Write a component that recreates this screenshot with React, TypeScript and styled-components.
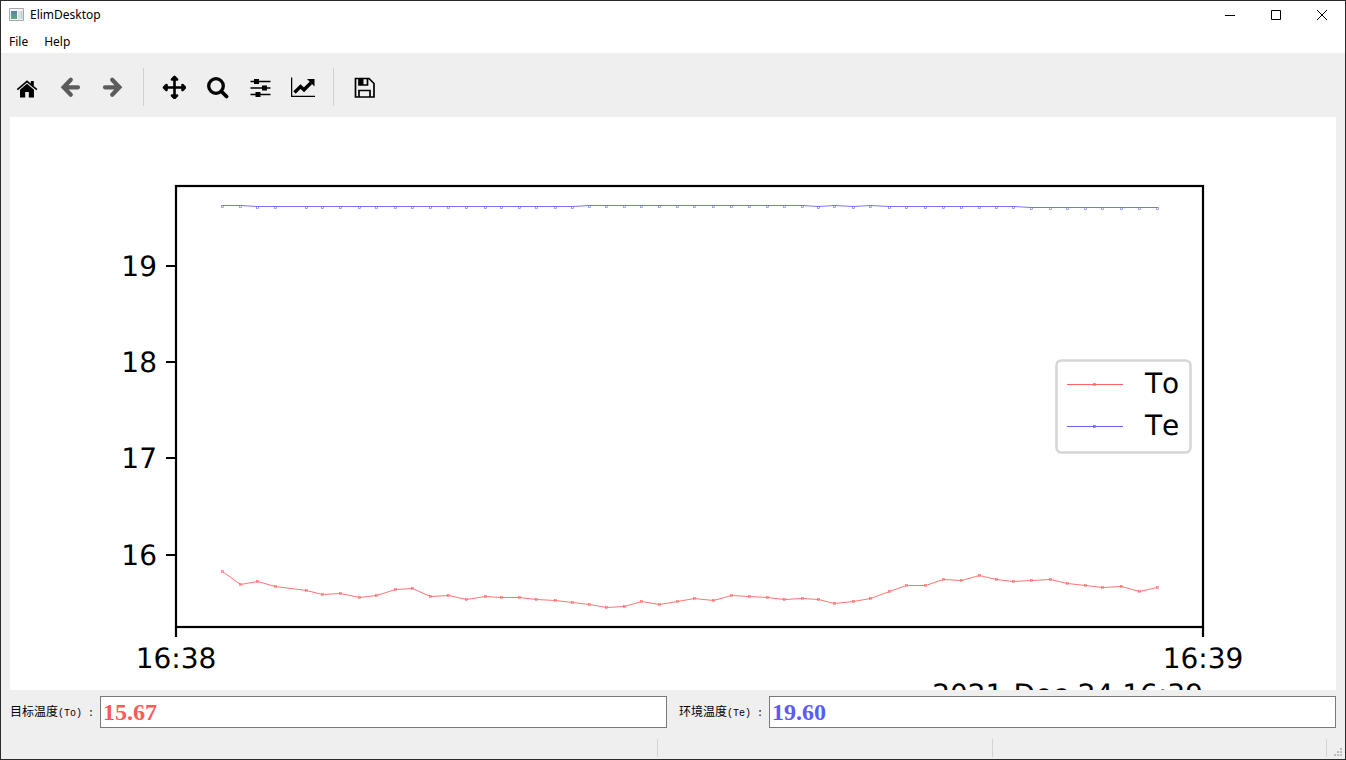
import React from "react";
import styled, { createGlobalStyle } from "styled-components";

const GlobalStyle = createGlobalStyle`
  *, *::before, *::after { box-sizing: border-box; }
  body { margin: 0; background: #efefef; }
`;

const Window = styled.div`
  display: flex;
  flex-direction: column;
  min-height: 100vh;
  border: 1px solid #2b2b2b;
  background: #efefef;
  color: #000;
  font: 12px/18px "Open Sans", sans-serif;
`;

const TitleBar = styled.header`
  display: flex;
  align-items: center;
  height: 28px;
  padding-left: 8px;
  background: #fff;
`;

const Title = styled.h1`
  flex: 1;
  margin: 0 0 0 5px;
  font: 400 12px/18px "Noto Sans", sans-serif;
`;

const CaptionButton = styled.button`
  display: flex;
  align-items: center;
  justify-content: center;
  width: 46px;
  height: 28px;
  padding: 0;
  border: 0;
  background: none;
`;

const MenuBar = styled.nav`
  display: flex;
  height: 24px;
  background: #fff;
`;

const MenuButton = styled.button`
  padding: 2px 8px 0;
  border: 0;
  background: none;
  color: #000;
  font: 12px/22px "Noto Sans", sans-serif;
`;

const Toolbar = styled.div`
  display: flex;
  align-items: center;
  height: 64px;
  padding: 4px 4px 0;
`;

const ToolButton = styled.button`
  display: flex;
  align-items: center;
  justify-content: center;
  width: 43px;
  height: 38px;
  padding: 0;
  border: 0;
  background: none;
  color: #000;
  &:disabled { color: #5c5c5c; }
`;

const Separator = styled.span`
  width: 1px;
  height: 38px;
  margin: 0 8px 0 9px;
  background: #d0d0d0;
`;

const Figure = styled.main`
  display: flex;
  flex: 1 0 auto;
  margin: 0 9px;
  background: #fff;
`;

const Plot = styled.svg`
  display: block;
  width: 100%;
  height: auto;
  overflow: hidden;
`;

const PlotText = styled.g`
  fill: #000;
  font: 28px "DejaVu Sans", sans-serif;
  font-kerning: none;
  text-rendering: geometricPrecision;
`;

const Readings = styled.form`
  display: flex;
  gap: 12px;
  padding: 6px 9px 0;
`;

const Field = styled.div`
  display: flex;
  flex: 1;
  align-items: center;
  min-width: 0;
`;

const FieldLabel = styled.label`
  flex: none;
  width: 90px;
  white-space: pre;
  font: 12px/16px "Noto Sans CJK SC", sans-serif;
`;

const FieldSymbol = styled.span`
  font: 10px/16px "Liberation Mono", monospace;
`;

const Reading = styled.input<{ $color: string }>`
  flex: 1;
  min-width: 0;
  height: 32px;
  padding: 0 2px;
  border: 1px solid #7a7a7a;
  border-radius: 0;
  outline: 0;
  background: #fff;
  color: ${(p) => p.$color};
  font: 700 24px/28px "Liberation Serif", serif;
`;

const StatusBar = styled.footer`
  display: flex;
  height: 31px;
  padding: 11px 0 2px;
`;

const StatusCell = styled.span`
  flex: 33;
  border-right: 1px solid #d3d3d3;
  &:first-child { flex-grow: 65; }
`;

const Grip = styled.svg`
  align-self: flex-end;
  width: 18px;
  height: 10px;
`;

type Point = [number, number];

const targetSeries: Point[] = [
  [222, 571], [240, 584], [257, 581], [275, 586], [306, 590], [322, 594], [340, 593], [359, 597],
  [376, 595], [395, 589], [412, 588], [430, 596], [448, 595], [466, 599], [485, 596], [501, 597],
  [519, 597], [536, 599], [555, 600], [572, 602], [589, 604], [606, 607], [624, 606], [641, 601],
  [659, 604], [677, 601], [694, 598], [713, 600], [731, 595], [749, 596], [767, 597], [784, 599],
  [802, 598], [818, 599], [834, 603], [853, 601], [870, 598], [889, 591], [906, 585], [925, 585],
  [943, 579], [961, 580], [979, 575], [996, 579], [1013, 581], [1031, 580], [1050, 579], [1067, 583],
  [1085, 585], [1102, 587], [1121, 586], [1139, 591], [1157, 587],
];

const ambientY = (x: number) => {
  if (x < 250) return 205;
  if (x < 580) return 206;
  if (x < 810) return 205;
  if (x === 834 || x === 870) return 205;
  return x < 1020 ? 206 : 207;
};
const ambientSeries: Point[] = targetSeries.map(([x]) => [x, ambientY(x)]);

type SeriesProps = { points: Point[]; color: string; markerDrop?: number };

const Series = ({ points, color, markerDrop = 0 }: SeriesProps) => (
  <g fill="none" stroke={color}>
    <polyline points={points.map(([x, y]) => `${x + 0.5},${y + 0.5}`).join(" ")} strokeWidth="0.9" />
    {points.map(([x, y]) => (
      <rect key={x} x={x - 0.5} y={y - 0.5 + markerDrop} width="2" height="2" strokeWidth="0.6" />
    ))}
  </g>
);

const RED = "#ff6464";
const BLUE = "#6464ff";

const Chart = () => (
  <Plot viewBox="10 117 1326 573" role="img" aria-label="To / Te">
    <rect x="176" y="186" width="1027" height="441" fill="none" stroke="#000" strokeWidth="2.2" />
    <path d="M166 266h10M166 362h10M166 458h10M166 555h10M176 627v10M1203 627v10" stroke="#000" strokeWidth="2.2" />
    <Series points={ambientSeries} color={BLUE} markerDrop={1} />
    <Series points={targetSeries} color={RED} />
    <rect x="1056.500" y="360.500" width="134" height="92" rx="5" fill="#fff" stroke="#d6d6d6" strokeWidth="2.600" />
    <PlotText>
      <g textAnchor="end">
        <text x="157" y="276">19</text>
        <text x="157" y="372">18</text>
        <text x="157" y="468">17</text>
        <text x="157" y="565">16</text>
        <text x="1203" y="704">2021-Dec-24 16:39</text>
      </g>
      <g textAnchor="middle">
        <text x="176" y="668">16:38</text>
        <text x="1203" y="668">16:39</text>
      </g>
      <text x="1145" y="393">To</text>
      <text x="1145" y="435">Te</text>
    </PlotText>
    <path d="M1067 384.500h56" stroke={RED} />
    <rect x="1093.500" y="383.500" width="2" height="2" fill="none" stroke={RED} strokeWidth="0.7" />
    <path d="M1067 426.500h56" stroke={BLUE} />
    <rect x="1093.500" y="425.500" width="2" height="2" fill="none" stroke={BLUE} strokeWidth="0.7" />
  </Plot>
);

const Icon = ({ children }: { children: React.ReactNode }) => (
  <svg width="24" height="24" viewBox="0 0 24 24" fill="currentColor" aria-hidden="true">
    {children}
  </svg>
);

const HomeIcon = () => (
  <Icon>
    <path d="M1.800 14 12 5.200l3.800 3.200V6h3v4.900l3.600 3.100-1 1.200L12 7.400l-9.200 7.800z" />
    <path d="M5 14.800 12 8.800l7 6V22.500h-5.200v-5.500h-3.600v5.500H5z" />
  </Icon>
);

const ArrowIcon = ({ flip }: { flip?: boolean }) => (
  <Icon>
    <path
      transform={flip ? "matrix(-1 0 0 1 24 0)" : undefined}
      d="M12.800 4.800 5.600 12.300l7.200 7.500M6.500 12.300H20"
      fill="none" stroke="currentColor" strokeWidth="4.200" strokeLinecap="round"
    />
  </Icon>
);

const PanIcon = () => (
  <Icon>
    <path
      d="M12.500 3v19M3 12.500h19M10 4.500l2.500-2.500L15 4.500zM10 20.500l2.500 2.500 2.500-2.500zM4.500 10 2 12.500 4.500 15zM20.500 10l2.500 2.500-2.500 2.500z"
      stroke="currentColor" strokeWidth="2.600" strokeLinejoin="round"
    />
  </Icon>
);

const ZoomIcon = () => (
  <Icon>
    <circle cx="11" cy="11" r="7.300" fill="none" stroke="currentColor" strokeWidth="3.300" />
    <path d="m16.500 16.500 5 5" stroke="currentColor" strokeWidth="3.800" strokeLinecap="round" />
  </Icon>
);

const SlidersIcon = () => (
  <Icon>
    <path d="M2.500 6.500h20M2.500 13h20M2.500 19.500h20" stroke="currentColor" strokeWidth="1.700" />
    <path d="M6 4h5v5H6zM14 10.500h5v5h-5zM7.500 17h5v5h-5z" />
  </Icon>
);

const TrendIcon = () => (
  <Icon>
    <path d="M.6 2.500v18.800H24" fill="none" stroke="currentColor" strokeWidth="1.300" />
    <path d="m3.500 17.500 6-6 3.500 3.300 7-7" fill="none" stroke="currentColor" strokeWidth="3.400" />
    <path d="M16 4h7.500v7.500z" />
  </Icon>
);

const SaveIcon = () => (
  <Icon>
    <path d="M3.500 3.500h13.500l5 5V22H3.500zM7 22v-6.500h11V22M7 3.500V10h8.500V3.500" fill="none" stroke="currentColor" strokeWidth="1.700" />
    <path d="M7 3.500h4.500V10H7z" />
  </Icon>
);

const AppIcon = () => (
  <svg width="16" height="16" viewBox="0 0 16 16" aria-hidden="true">
    <defs>
      <linearGradient id="pane" x2="0" y2="1">
        <stop stopColor="#5580ae" />
        <stop offset="1" stopColor="#60ac7b" />
      </linearGradient>
    </defs>
    <path d="M.5 1.500h14v12H.5z" fill="#f5f5f5" stroke="#a4a8ac" />
    <path d="M2 4h6v8H2z" fill="url(#pane)" />
    <path d="M9 4h2v8H9z" fill="#d9e1e5" />
    <path d="M11.500 4h2v8h-2z" fill="#b9cdd6" />
  </svg>
);

const captions = [
  { label: "Minimize", path: "M0 5.500h10" },
  { label: "Maximize", path: "M.5.500h9v9h-9z" },
  { label: "Close", path: "m0 0 10 10M10 0 0 10" },
];

const App = () => (
  <Window>
    <GlobalStyle />
    <TitleBar>
      <AppIcon />
      <Title>ElimDesktop</Title>
      {captions.map(({ label, path }) => (
        <CaptionButton key={label} type="button" aria-label={label}>
          <svg width="10" height="10" viewBox="0 0 10 10" fill="none" stroke="#000">
            <path d={path} />
          </svg>
        </CaptionButton>
      ))}
    </TitleBar>
    <MenuBar>
      <MenuButton type="button">File</MenuButton>
      <MenuButton type="button">Help</MenuButton>
    </MenuBar>
    <Toolbar role="toolbar">
      <ToolButton type="button" aria-label="Home"><HomeIcon /></ToolButton>
      <ToolButton type="button" aria-label="Back" disabled><ArrowIcon /></ToolButton>
      <ToolButton type="button" aria-label="Forward" disabled><ArrowIcon flip /></ToolButton>
      <Separator />
      <ToolButton type="button" aria-label="Pan"><PanIcon /></ToolButton>
      <ToolButton type="button" aria-label="Zoom"><ZoomIcon /></ToolButton>
      <ToolButton type="button" aria-label="Subplots"><SlidersIcon /></ToolButton>
      <ToolButton type="button" aria-label="Customize"><TrendIcon /></ToolButton>
      <Separator />
      <ToolButton type="button" aria-label="Save"><SaveIcon /></ToolButton>
    </Toolbar>
    <Figure><Chart /></Figure>
    <Readings>
      <Field>
        <FieldLabel htmlFor="target">目标温度<FieldSymbol>(To) :</FieldSymbol></FieldLabel>
        <Reading id="target" $color="#ff5a5a" defaultValue="15.67" />
      </Field>
      <Field>
        <FieldLabel htmlFor="ambient">环境温度<FieldSymbol>(Te) :</FieldSymbol></FieldLabel>
        <Reading id="ambient" $color="#5a5aff" defaultValue="19.60" />
      </Field>
    </Readings>
    <StatusBar>
      <StatusCell />
      <StatusCell />
      <StatusCell />
      <Grip viewBox="0 0 18 10" fill="#bdbdbd" aria-hidden="true">
        <path d="M13 1h2v2h-2zM10 4h2v2h-2zM13 4h2v2h-2zM7 7h2v2H7zM10 7h2v2h-2zM13 7h2v2h-2z" />
      </Grip>
    </StatusBar>
  </Window>
);

export default App;
